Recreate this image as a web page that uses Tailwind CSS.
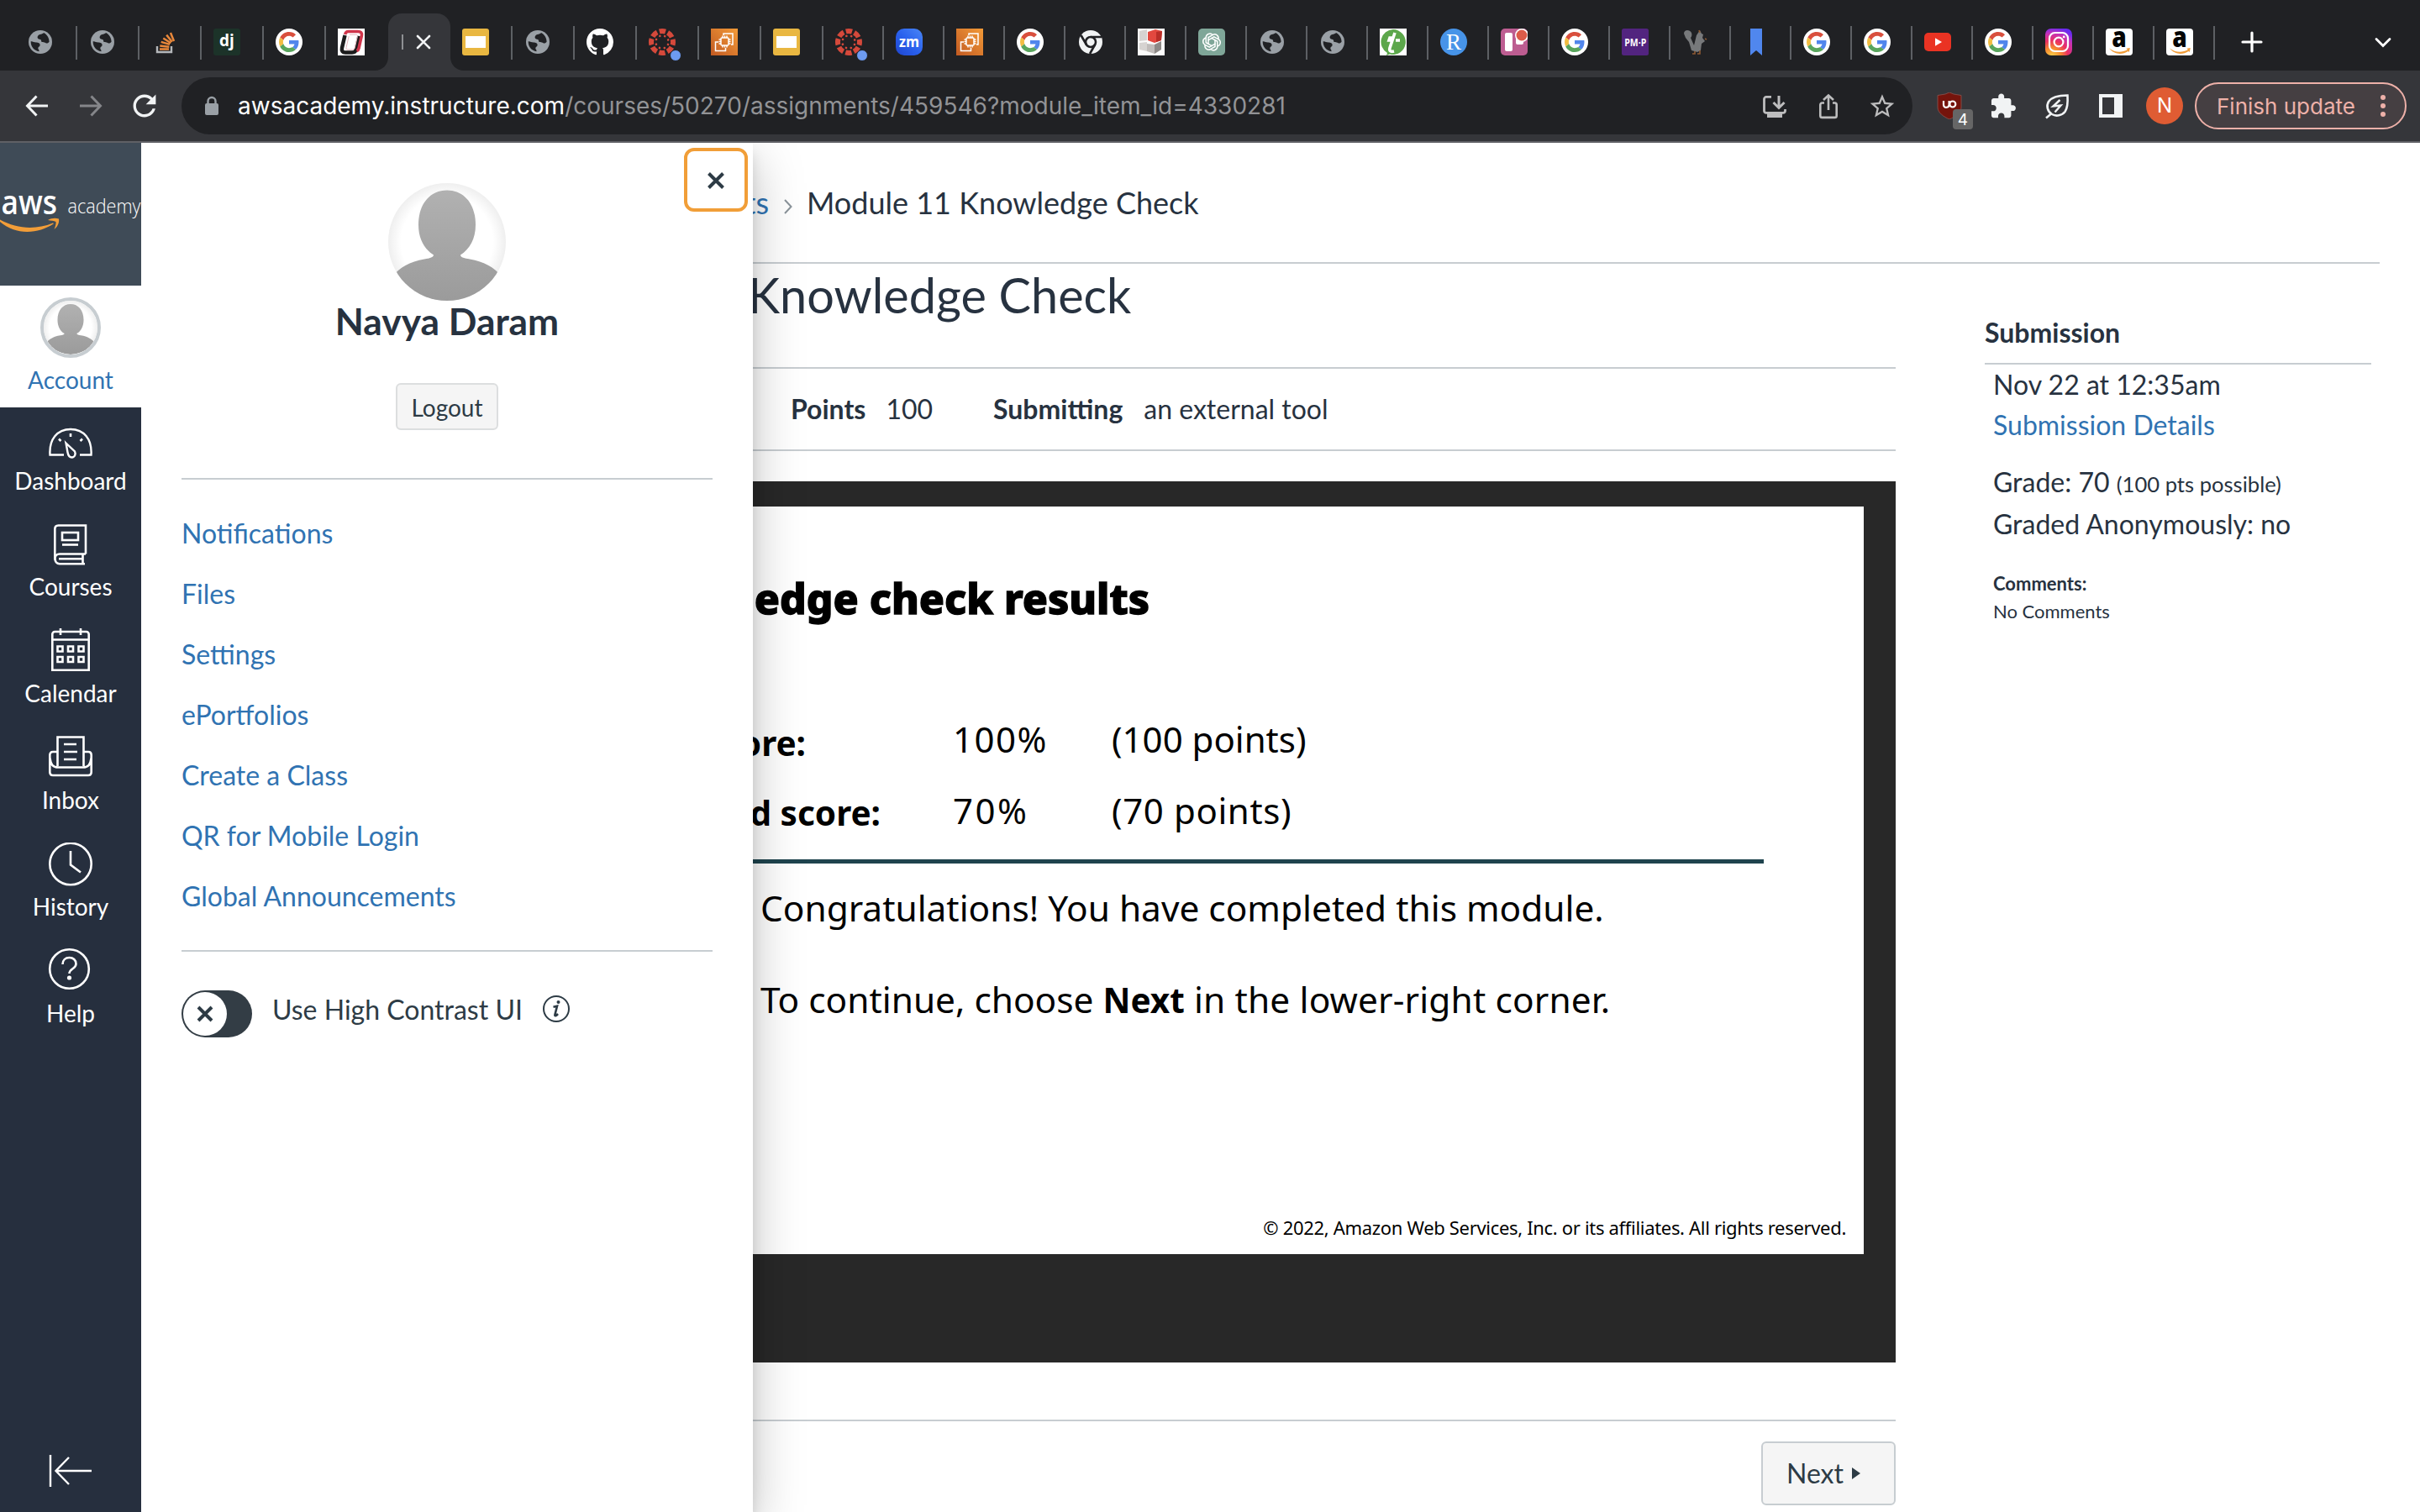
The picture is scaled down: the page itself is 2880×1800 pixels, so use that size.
<!DOCTYPE html>
<html lang="en">
<head>
<meta charset="utf-8">
<title>Module 11 Knowledge Check</title>
<script src="https://cdn.jsdelivr.net/npm/@tailwindcss/browser@4"></script>
</head>
<body class="w-[2880px] h-[1800px] overflow-hidden bg-white text-[#273240] font-['Lato',sans-serif]">

<!-- Shared icon symbols -->
<svg class="absolute size-0" aria-hidden="true">
  <defs>
    <linearGradient id="g-ec2" x1="0" y1="1" x2="1" y2="0"><stop offset="0" stop-color="#c25a22"/><stop offset="1" stop-color="#f39b38"/></linearGradient>
    <linearGradient id="g-zoom" x1="0" y1="1" x2="1" y2="0"><stop offset="0" stop-color="#1f45cf"/><stop offset=".5" stop-color="#2a62ee"/><stop offset="1" stop-color="#4a86f5"/></linearGradient>
    <radialGradient id="g-ig" cx=".25" cy="1.05" r="1.1"><stop offset="0" stop-color="#fdd74f"/><stop offset=".3" stop-color="#f68b2f"/><stop offset=".55" stop-color="#ea2f62"/><stop offset=".8" stop-color="#c532b8"/><stop offset="1" stop-color="#6a2bf0"/></radialGradient>
    <linearGradient id="g-face" x1="0" y1="0" x2="0" y2="1"><stop offset="0" stop-color="#b1b1b1"/><stop offset="1" stop-color="#999"/></linearGradient>
    <radialGradient id="g-halo" cx=".5" cy=".5" r=".5"><stop offset="0" stop-color="#fff"/><stop offset=".78" stop-color="#fff"/><stop offset="1" stop-color="#efefef"/></radialGradient>
    <clipPath id="c-round"><circle cx="70" cy="70" r="70"/></clipPath>
  </defs>
  <symbol id="globe" viewBox="0 0 32 32"><circle cx="16" cy="16" r="14" fill="#9aa0a6"/><path d="M20.500 5.200c-1.500 2-5 1.300-6.700 3.500-1.500 2-.3 3.900 1.700 4.300 1.600.2 2.300 1.200 2.200 2.700 1.200 1.400 3.500.2 5 1.500 1.300 1.200 3.200.4 4.400-1.200C27 11 24.300 7 20.500 5.200z" fill="#202124" transform="translate(-.5 -.3)"/><path d="M4.700 15.300c2.400-.2 3.600 1.200 6.300 1.300 2.500 0 4.800 1 4.600 3.200-.2 2-2.100 1.800-2.300 3.500-.1 1.400 1.500 1.700 1.200 3.900C8.500 26.500 4.500 21.500 4.700 15.300z" fill="#202124"/></symbol>
  <symbol id="google" viewBox="0 0 32 32"><circle cx="16" cy="16" r="16" fill="#fff"/><g transform="translate(4 4) scale(.5)"><path fill="#d94f3d" d="M24 9.500c3.540 0 6.710 1.220 9.210 3.600l6.850-6.850C35.900 2.380 30.470 0 24 0 14.620 0 6.510 5.380 2.560 13.220l7.980 6.190C12.430 13.720 17.740 9.500 24 9.500z"/><path fill="#5186ec" d="M46.980 24.550c0-1.570-.15-3.090-.38-4.550H24v9.020h12.940c-.58 2.960-2.260 5.480-4.780 7.180l7.730 6c4.510-4.180 7.090-10.360 7.090-17.650z"/><path fill="#f2bd42" d="M10.530 28.590c-.48-1.450-.76-2.990-.76-4.590s.27-3.140.76-4.590l-7.980-6.190C.92 16.460 0 20.120 0 24c0 3.880.92 7.540 2.560 10.780l7.970-6.190z"/><path fill="#58a55c" d="M24 48c6.480 0 11.930-2.130 15.890-5.810l-7.730-6c-2.150 1.450-4.920 2.300-8.160 2.300-6.260 0-11.570-4.220-13.470-9.910l-7.980 6.190C6.510 42.620 14.620 48 24 48z"/></g></symbol>
  <symbol id="slides" viewBox="0 0 32 32"><rect width="32" height="32" rx="3" fill="#e9b741"/><rect x="4" y="9" width="24" height="14" fill="#fff"/></symbol>
  <symbol id="canvas" viewBox="0 0 32 32"><circle cx="16" cy="16" r="13" fill="none" stroke="#d5493b" stroke-width="6" stroke-dasharray="7.400 2.810" stroke-dashoffset="3.700"/><circle cx="16" cy="16" r="7.600" fill="none" stroke="#d5493b" stroke-width="2.600" stroke-linecap="round" stroke-dasharray=".1 5.870" stroke-dashoffset="-2.980"/></symbol>
  <symbol id="ec2" viewBox="0 0 32 32"><rect width="32" height="32" fill="url(#g-ec2)"/><g fill="none" stroke="#fff" stroke-width="1.500"><rect x="12" y="11" width="9" height="9" rx="1"/><path d="M14 11V8.500M16.500 11V8.500M19 11V8.500M14 20v2.500M16.500 20v2.500M19 20v2.500M12 13H9.500M12 15.500H9.500M12 18H9.500M21 13h2.500M21 15.500h2.500M21 18h2.500M15 8V6h11v13h-2M9 16H5.500v10.500h12V23"/></g></symbol>
  <symbol id="amazon" viewBox="0 0 32 32"><rect width="32" height="32" rx="4" fill="#fff"/><text x="16" y="21.500" text-anchor="middle" font-family="Open Sans" font-weight="800" font-size="33" textLength="17.500" lengthAdjust="spacingAndGlyphs" fill="#050505">a</text><path d="M4 23.500c7 5.200 15 5.400 22 1.600l-1.700-1.300 4.500-.8-1 5-1.300-1C19.500 31.500 10 31 4 23.500z" fill="#f09b37"/></symbol>
  <symbol id="face" viewBox="0 0 140 140"><circle cx="70" cy="70" r="70" fill="url(#g-halo)"/><g clip-path="url(#c-round)" fill="url(#g-face)"><path d="M70 8.500c20 0 34 16 34 41 0 17-7 29-18 36 0 3 5 4 11 5 17 3 30 10 38 21v40H5v-40c8-11 21-18 38-21 6-1 11-2 11-5-11-7-18-19-18-36 0-25 14-41 34-41z"/></g></symbol>
</svg>

<!-- Browser tab strip -->
<header class="h-[84px] bg-[#202124] flex items-start pl-[18px]">
  <div class="flex h-[40px] mt-[31px]">
    <div class="w-[74px] h-10 pt-[3px] pl-[14px] border-r-2 border-[#5d6064]"><svg class="size-8"><use href="#globe"/></svg></div>
    <div class="w-[74px] h-10 pt-[3px] pl-[14px] border-r-2 border-[#5d6064]"><svg class="size-8"><use href="#globe"/></svg></div>
    <div class="w-[74px] h-10 pt-[3px] pl-[14px] border-r-2 border-[#5d6064]">
      <svg class="size-8" viewBox="0 0 32 32" fill="none"><path d="M7 21v7h17v-7" stroke="#b4b7ba" stroke-width="2.400"/><path d="M10 24.500h11M10.300 20.500l11 1.200M11.700 15.900l10.300 3M14.300 11.500l9 5.700M18.200 7.600l6.500 8.200M23 5l4 10" stroke="#e8873a" stroke-width="2.500"/></svg>
    </div>
    <div class="w-[74px] h-10 pt-[3px] pl-[14px] border-r-2 border-[#5d6064]">
      <div class="size-8 rounded-[3px] bg-[#1c3329] text-white font-['Open_Sans',sans-serif] font-bold text-[19px] leading-[28px] text-center">dj</div>
    </div>
    <div class="w-[74px] h-10 pt-[3px] pl-[14px] border-r-2 border-[#5d6064]"><svg class="size-8"><use href="#google"/></svg></div>
    <div class="w-[74px] h-10 pt-[3px] pl-[14px]">
      <svg class="size-8" viewBox="0 0 32 32" fill="none"><rect width="32" height="32" fill="#fff"/><path d="M8.500 8L5 23c-.7 3.500.8 5.500 4 5.500h8c3 0 4.500-1.500 5.200-4.500L25.500 9" stroke="#1c1c1c" stroke-width="4.500"/><path d="M12.500 3.500H24c3.500 0 5 1.800 4.400 5L25 23.500c-.4 1.800-1.200 2.600-2.500 3M12.500 3.500c-2.200 0-3.300 1.200-3.900 3.500" stroke="#d0354b" stroke-width="3.600"/><path d="M14 7.200h7.500c1.500 0 2.200.8 1.900 2.300l-3.200 13.600c-.3 1.300-1.100 1.900-2.300 1.900h-6c-1.500 0-2.200-.8-1.900-2.300l3.200-13.600" stroke="#e5b7be" stroke-width="1"/></svg>
    </div>
  </div>
  <!-- Active tab -->
  <div class="relative w-[74px] h-[68px] mt-4 bg-[#35363a] rounded-t-[16px] flex items-center pl-4">
    <svg class="absolute bottom-0 -left-4 size-4" viewBox="0 0 16 16"><path d="M16 0v16H0C9 16 16 9 16 0z" fill="#35363a"/></svg>
    <svg class="absolute bottom-0 -right-4 size-4" viewBox="0 0 16 16"><path d="M0 0v16h16C7 16 0 9 0 0z" fill="#35363a"/></svg>
    <span class="w-[2px] h-[18px] bg-[#8e9093]"></span>
    <svg class="size-5 ml-[14px]" viewBox="0 0 20 20"><path d="M3 3l14 14M17 3L3 17" stroke="#f1f3f4" stroke-width="2.600" stroke-linecap="round"/></svg>
  </div>
  <div class="flex h-[40px] mt-[31px]">
    <div class="w-[74px] h-10 pt-[3px] pl-[14px] border-r-2 border-[#5d6064]"><svg class="size-8"><use href="#slides"/></svg></div>
    <div class="w-[74px] h-10 pt-[3px] pl-[14px] border-r-2 border-[#5d6064]"><svg class="size-8"><use href="#globe"/></svg></div>
    <div class="w-[74px] h-10 pt-[3px] pl-[14px] border-r-2 border-[#5d6064]">
      <svg class="size-8" viewBox="0 0 16 16"><path fill="#fff" d="M8 0C3.580 0 0 3.580 0 8c0 3.540 2.290 6.530 5.470 7.590.4.070.55-.17.55-.38 0-.19-.01-.82-.01-1.490-2.010.37-2.530-.49-2.690-.94-.09-.23-.48-.94-.82-1.130-.28-.15-.68-.52-.01-.53.63-.01 1.080.58 1.230.82.72 1.210 1.870.87 2.330.66.070-.52.28-.87.51-1.070-1.780-.2-3.640-.89-3.640-3.950 0-.87.31-1.590.82-2.150-.08-.2-.36-1.020.08-2.120 0 0 .67-.21 2.200.82.64-.18 1.320-.27 2-.27.68 0 1.360.09 2 .27 1.530-1.040 2.200-.82 2.200-.82.44 1.100.16 1.920.08 2.120.51.56.82 1.270.82 2.150 0 3.070-1.870 3.750-3.650 3.950.29.25.54.73.54 1.480 0 1.070-.01 1.930-.01 2.200 0 .21.15.46.55.38A8.013 8.013 0 0016 8c0-4.420-3.580-8-8-8z"/></svg>
    </div>
    <div class="relative w-[74px] h-10 pt-[3px] pl-[14px] border-r-2 border-[#5d6064]"><svg class="size-8"><use href="#canvas"/></svg><span class="absolute left-[39px] top-[28px] size-[14px] rounded-full bg-[#6d9bf1] border border-[#202124]"></span></div>
    <div class="w-[74px] h-10 pt-[3px] pl-[14px] border-r-2 border-[#5d6064]"><svg class="size-8"><use href="#ec2"/></svg></div>
    <div class="w-[74px] h-10 pt-[3px] pl-[14px] border-r-2 border-[#5d6064]"><svg class="size-8"><use href="#slides"/></svg></div>
    <div class="relative w-[72px] h-10 pt-[3px] pl-[14px] border-r-2 border-[#5d6064]"><svg class="size-8"><use href="#canvas"/></svg><span class="absolute left-[39px] top-[28px] size-[14px] rounded-full bg-[#6d9bf1] border border-[#202124]"></span></div>
    <div class="w-[72px] h-10 pt-[3px] pl-[14px] border-r-2 border-[#5d6064]">
      <svg class="size-8" viewBox="0 0 32 32"><rect width="32" height="32" rx="10" fill="url(#g-zoom)"/><text x="16" y="21.500" text-anchor="middle" font-family="Open Sans" font-weight="700" font-size="17" textLength="24" lengthAdjust="spacingAndGlyphs" fill="#fff">zm</text></svg>
    </div>
    <div class="w-[72px] h-10 pt-[3px] pl-[14px] border-r-2 border-[#5d6064]"><svg class="size-8"><use href="#ec2"/></svg></div>
    <div class="w-[72px] h-10 pt-[3px] pl-[14px] border-r-2 border-[#5d6064]"><svg class="size-8"><use href="#google"/></svg></div>
    <div class="w-[72px] h-10 pt-[3px] pl-[14px] border-r-2 border-[#5d6064]">
      <svg class="size-8" viewBox="0 0 32 32"><circle cx="16" cy="16" r="14" fill="#f1f3f4"/><circle cx="16" cy="16" r="6" fill="#f1f3f4" stroke="#202124" stroke-width="2.600"/><path d="M16 10h13M10.800 19L4.500 8M21.200 19L15 30" stroke="#202124" stroke-width="2.600"/></svg>
    </div>
    <div class="w-[72px] h-10 pt-[3px] pl-[14px] border-r-2 border-[#5d6064]">
      <svg class="size-8" viewBox="0 0 32 32"><rect width="32" height="32" fill="#fbfbfb"/><path d="M2 3l9-2v13l-9 1zM2 17l9-1v11l-9-2z" fill="#d6d3d1"/><path d="M11 18l9 1v11l-9-3z" fill="#c0bcba"/><path d="M20 19l8-4v10l-8 5z" fill="#8d8987"/><path d="M12 4l9-3 8 2-1 11-8 3-8-3z" fill="#e2483f"/><path d="M22 4l7-1-1 11-6 2z" fill="#b92e28"/></svg>
    </div>
    <div class="w-[72px] h-10 pt-[3px] pl-[14px] border-r-2 border-[#5d6064]">
      <svg class="size-8" viewBox="0 0 32 32" fill="none"><rect width="32" height="32" rx="5" fill="#7fa698"/><g stroke="#fff" stroke-width="1.500"><path d="M12 19V10.500l5.500-3.200a4.600 4.600 0 016.500 5"/><path d="M12 19V10.500l5.500-3.200a4.600 4.600 0 016.500 5" transform="rotate(60 16 16)"/><path d="M12 19V10.500l5.500-3.200a4.600 4.600 0 016.500 5" transform="rotate(120 16 16)"/><path d="M12 19V10.500l5.500-3.200a4.600 4.600 0 016.500 5" transform="rotate(180 16 16)"/><path d="M12 19V10.500l5.500-3.200a4.600 4.600 0 016.500 5" transform="rotate(240 16 16)"/><path d="M12 19V10.500l5.500-3.200a4.600 4.600 0 016.500 5" transform="rotate(300 16 16)"/></g></svg>
    </div>
    <div class="w-[72px] h-10 pt-[3px] pl-[14px] border-r-2 border-[#5d6064]"><svg class="size-8"><use href="#globe"/></svg></div>
    <div class="w-[72px] h-10 pt-[3px] pl-[14px] border-r-2 border-[#5d6064]"><svg class="size-8"><use href="#globe"/></svg></div>
    <div class="w-[72px] h-10 pt-[3px] pl-[14px] border-r-2 border-[#5d6064]">
      <svg class="size-8" viewBox="0 0 32 32"><rect width="32" height="32" fill="#fff"/><path d="M16 1a15 15 0 11-4 29.500L8 32l1-3A15 15 0 0116 1z" fill="#5ca74b"/><path d="M18 5l-2 6h-4l-1 3h4l-3 9c-1 4 1 5 5 4M19 14h5" fill="none" stroke="#fff" stroke-width="3.600"/></svg>
    </div>
    <div class="w-[72px] h-10 pt-[3px] pl-[14px] border-r-2 border-[#5d6064]">
      <div class="size-8 rounded-full bg-[#4794e8] text-white font-['Liberation_Serif',serif] text-[27px] leading-[32px] text-center">R</div>
    </div>
    <div class="w-[72px] h-10 pt-[3px] pl-[14px] border-r-2 border-[#5d6064]">
      <svg class="size-8" viewBox="0 0 32 32"><rect width="32" height="32" rx="5" fill="#bd5d91"/><rect x="5" y="5" width="9" height="22" rx="2" fill="#fff"/><rect x="18" y="5" width="9" height="14" rx="2" fill="#fff"/><circle cx="25" cy="8" r="8" fill="#fff"/><circle cx="25" cy="8" r="6.500" fill="#dc5b49"/></svg>
    </div>
    <div class="w-[72px] h-10 pt-[3px] pl-[14px] border-r-2 border-[#5d6064]"><svg class="size-8"><use href="#google"/></svg></div>
    <div class="w-[72px] h-10 pt-[3px] pl-[14px] border-r-2 border-[#5d6064]">
      <svg class="size-8" viewBox="0 0 32 32"><rect width="32" height="32" rx="2.500" fill="#52247f"/><text x="16.300" y="21" text-anchor="middle" font-family="Open Sans" font-weight="700" font-size="12.500" textLength="26" lengthAdjust="spacingAndGlyphs" fill="#fff">PM·P</text></svg>
    </div>
    <div class="w-[72px] h-10 pt-[3px] pl-[14px] border-r-2 border-[#5d6064]">
      <svg class="size-8" viewBox="0 0 32 32"><path d="M2 6c0-5 7-5 9-1 1 3 0 5-1 6l4 9 3-12 4-6 2 4 2 1-1 4 3 4-4 3-1 8-4 2-7-2-3-10-4-5z" fill="#77797b"/><path d="M15 27v3h-3M21 26v4h-3M20 2l1 3M27 12l2 1" fill="none" stroke="#8f5a33" stroke-width="1.600"/></svg>
    </div>
    <div class="w-[72px] h-10 pt-[3px] pl-[14px] border-r-2 border-[#5d6064]">
      <svg class="size-8" viewBox="0 0 32 32"><path d="M9 0h14v32l-7-6-7 6z" fill="#5087ee"/></svg>
    </div>
    <div class="w-[72px] h-10 pt-[3px] pl-[14px] border-r-2 border-[#5d6064]"><svg class="size-8"><use href="#google"/></svg></div>
    <div class="w-[72px] h-10 pt-[3px] pl-[14px] border-r-2 border-[#5d6064]"><svg class="size-8"><use href="#google"/></svg></div>
    <div class="w-[72px] h-10 pt-[3px] pl-[14px] border-r-2 border-[#5d6064]">
      <svg class="size-8" viewBox="0 0 32 32"><rect y="5" width="32" height="22" rx="5" fill="#ea3323"/><path d="M13 11.200l8 4.800-8 4.800z" fill="#fff"/></svg>
    </div>
    <div class="w-[72px] h-10 pt-[3px] pl-[14px] border-r-2 border-[#5d6064]"><svg class="size-8"><use href="#google"/></svg></div>
    <div class="w-[72px] h-10 pt-[3px] pl-[14px] border-r-2 border-[#5d6064]">
      <svg class="size-8" viewBox="0 0 32 32" fill="none"><rect width="32" height="32" rx="7" fill="url(#g-ig)"/><rect x="5" y="5" width="22" height="22" rx="6.500" stroke="#fff" stroke-width="2.200"/><circle cx="16" cy="16" r="5.400" stroke="#fff" stroke-width="2.200"/><circle cx="22.200" cy="9.900" r="1.400" fill="#fff"/></svg>
    </div>
    <div class="w-[72px] h-10 pt-[3px] pl-[14px] border-r-2 border-[#5d6064]"><svg class="size-8"><use href="#amazon"/></svg></div>
    <div class="w-[72px] h-10 pt-[3px] pl-[14px] border-r-2 border-[#5d6064]"><svg class="size-8"><use href="#amazon"/></svg></div>
  </div>
  <svg class="size-8 mt-[34px] ml-[28px]" viewBox="0 0 32 32"><path d="M16 5v22M5 16h22" stroke="#fff" stroke-width="3.200" stroke-linecap="round"/></svg>
  <svg class="size-8 mt-[34px] ml-[124px]" viewBox="0 0 32 32" fill="none"><path d="M8 12.500l8 8 8-8" stroke="#fff" stroke-width="2.800" stroke-linecap="round"/></svg>
</header>

<!-- Browser toolbar -->
<div class="h-[86px] bg-[#35363a] border-b-2 border-[#5f6065] flex items-center pl-7">
  <svg class="size-8 shrink-0" viewBox="0 0 32 32" fill="none"><path d="M29 16H5M15.500 4.500L4.500 16l11 11.500" stroke="#f1f3f4" stroke-width="3"/></svg>
  <svg class="size-8 shrink-0 ml-8" viewBox="0 0 32 32" fill="none"><path d="M3 16h24M16.500 4.500l11 11.500-11 11.500" stroke="#85868a" stroke-width="3"/></svg>
  <svg class="size-8 shrink-0 ml-8" viewBox="0 0 32 32"><path transform="translate(-4.200 -4.200) scale(1.680)" fill="#f1f3f4" d="M17.650 6.350C16.200 4.900 14.210 4 12 4c-4.420 0-7.990 3.580-7.990 8s3.570 8 7.990 8c3.730 0 6.840-2.550 7.730-6h-2.080c-.82 2.330-3.040 4-5.650 4-3.310 0-6-2.690-6-6s2.690-6 6-6c1.660 0 3.140.69 4.220 1.780L13 11h7V4l-2.350 2.350z"/></svg>
  <div class="ml-7 w-[2060px] h-[68px] rounded-full bg-[#202124] flex items-center pl-[22px] pr-5">
    <svg class="size-7 shrink-0" viewBox="0 0 28 28"><rect x="6" y="11" width="16" height="14" rx="2" fill="#9aa0a6"/><path d="M9.500 12V8.500a4.500 4.500 0 019 0V12" fill="none" stroke="#9aa0a6" stroke-width="2.400"/></svg>
    <div class="ml-[17px] font-['Inter',sans-serif] text-[28px] leading-[40px] text-[#929396] whitespace-nowrap"><span class="text-white">awsacademy.instructure.com</span>/courses/50270/assignments/459546?module_item_id=4330281</div>
    <div class="ml-auto flex gap-8">
      <svg class="size-8" viewBox="0 0 32 32" fill="none" stroke="#bdbdbe" stroke-width="2.800"><path d="M12 5.400H6a2.500 2.500 0 00-2.500 2.500v14a2.500 2.500 0 002.500 2.500h20a2.500 2.500 0 002.500-2.500v-2"/><path d="M21 4v14M14.500 12l6.500 6.500 6.500-6.500" stroke-width="3"/><path d="M7 27h18" stroke-width="6"/></svg>
      <svg class="size-8" viewBox="0 0 32 32" fill="none" stroke="#bdbdbe" stroke-width="2.600"><path d="M11 12.500H8.500a2.200 2.200 0 00-2.200 2.200v13a2.200 2.200 0 002.200 2.200h15a2.200 2.200 0 002.200-2.200v-13a2.200 2.200 0 00-2.200-2.200H21M16 21V4.500M10 9l6-5.500L22 9"/></svg>
      <svg class="size-8" viewBox="0 0 32 32"><path transform="translate(-1.200 -.5) scale(1.430)" fill="#bdbdbe" d="M22 9.240l-7.190-.62L12 2 9.190 8.630 2 9.240l5.460 4.730L5.820 21 12 17.270 18.180 21l-1.630-7.030L22 9.240zM12 15.400l-3.760 2.270 1-4.280-3.320-2.880 4.380-.38L12 6.100l1.710 4.040 4.380.38-3.320 2.880 1 4.280L12 15.400z"/></svg>
    </div>
  </div>
  <div class="relative ml-7 size-8 shrink-0">
    <svg class="size-8" viewBox="0 0 32 32"><path d="M16 0l5 2 9 1.500V18c0 6-7 11-14 14C9 29 2 24 2 18V3.500L11 2z" fill="#75140c" stroke="#8d5550" stroke-width=".8"/><path d="M9 10v4.500a3 3 0 003.300 3.300c2 0 3.300-1.300 3.300-3.300V10" fill="none" stroke="#fff" stroke-width="2.200"/><circle cx="19.800" cy="14" r="3.500" fill="none" stroke="#fff" stroke-width="2.200"/></svg>
    <span class="absolute left-5 top-5 w-6 h-6 rounded-[4px] bg-[#666] text-white font-['Inter',sans-serif] text-[19px] leading-[26px] text-center">4</span>
  </div>
  <svg class="ml-8 size-8 shrink-0" viewBox="0 0 32 32"><path transform="translate(-.8 0) scale(1.380)" fill="#f1f3f4" d="M20.500 11H19V7c0-1.100-.9-2-2-2h-4V3.500C13 2.120 11.880 1 10.500 1S8 2.120 8 3.500V5H4c-1.100 0-1.990.9-1.990 2v3.800H3.500c1.490 0 2.700 1.210 2.700 2.700s-1.210 2.700-2.700 2.700H2V20c0 1.100.9 2 2 2h3.800v-1.500c0-1.490 1.210-2.700 2.700-2.700 1.490 0 2.700 1.210 2.700 2.700V22H17c1.100 0 2-.9 2-2v-4h1.500c1.380 0 2.500-1.120 2.500-2.500S21.880 11 20.500 11z"/></svg>
  <svg class="ml-8 size-8 shrink-0" viewBox="0 0 32 32" fill="none" stroke="#f1f3f4" stroke-width="2.600"><path d="M28.500 3.500c.5 8 .5 14.500-3 19.500-3.500 4.500-10.500 6-15.500 3C4.500 22.500 3 16 6 11 10 5 18 3.500 28.500 3.500zM9 25.500l-6 5"/><path d="M19.500 9l-8 7.500 9-1-7 8" stroke-width="2.400"/></svg>
  <svg class="ml-8 size-8 shrink-0" viewBox="0 0 32 32"><path d="M2 2h28v28H2zM6 6v20h14V6z" fill="#f1f3f4" fill-rule="evenodd"/></svg>
  <div class="ml-[26px] size-11 shrink-0 rounded-full bg-[#df5c33] text-white font-['Inter',sans-serif] text-[24px] leading-[44px] text-center">N</div>
  <div class="ml-[14px] w-[252px] h-14 rounded-full border-2 border-[#eeb1a9] bg-[#453f42] flex items-center pl-6 text-[#eeb1a9] font-['Inter',sans-serif] text-[26px] whitespace-nowrap">
    Finish update
    <div class="flex flex-col gap-1 ml-[30px]"><span class="size-[6px] rounded-full bg-[#eeb1a9]"></span><span class="size-[6px] rounded-full bg-[#eeb1a9]"></span><span class="size-[6px] rounded-full bg-[#eeb1a9]"></span></div>
  </div>
</div>

<div class="relative flex h-[1630px]">
  <!-- Global navigation -->
  <nav class="w-[168px] shrink-0 bg-[#262f3e] text-white text-[28px] leading-[34px] flex flex-col">
    <div class="h-[170px] bg-[#3f4b57]">
      <svg class="w-[168px] h-[170px]" viewBox="0 0 168 170"><text x="1.500" y="85.300" font-family="Open Sans" font-weight="600" font-size="39" textLength="66.500" lengthAdjust="spacingAndGlyphs" fill="#fff">aws</text><text x="80.500" y="84" font-family="Open Sans" font-weight="300" font-size="23.500" textLength="87" lengthAdjust="spacingAndGlyphs" fill="#fff">academy</text><path d="M0 91.500c20 11 42 12.500 63 4l1 .8C45 109 18 110 0 94z" fill="#f29d38"/><path d="M57 92c4-2.500 9-3 13-1.500.8 4.500-1.500 9.500-5.500 12.500 1.300-3.500 2.500-7 2-9-2.300-1-6-1.500-9.500-2z" fill="#f29d38"/></svg>
    </div>
    <a class="h-[145px] bg-white text-[#3073b2] flex flex-col items-center pt-[14px]">
      <span class="size-[72px] rounded-full border-4 border-[#c7cdd1] overflow-hidden"><svg class="size-16"><use href="#face"/></svg></span>
      <span class="mt-[9px]">Account</span>
    </a>
    <div class="flex flex-col gap-[34px] pt-[10px]">
      <a class="flex flex-col items-center gap-2 -mb-px">
        <svg class="w-[52px] h-[52px]" viewBox="0 0 52 52" fill="none" stroke="#fff" stroke-width="2.400"><path d="M18 46.500H1.500C.3 28 10 16 26 16s25.700 12 24.500 30.500H37"/><path d="M26 21v4M12 27.500l2.500 2.500M40 27.500L37.500 30" stroke-width="2.600"/><path d="M20.500 32.500l10.500 10c1.500 3 0 7-3.500 7s-4.500-3-5-6z"/></svg>
        <span>Dashboard</span>
      </a>
      <a class="flex flex-col items-center gap-[7px]">
        <svg class="w-[52px] h-[52px]" viewBox="0 0 52 52" fill="none" stroke="#fff" stroke-width="2.600"><path d="M44 37.500V3.500H11.500C8.500 3.500 7.300 5 7.300 8v36.500M44 37.500H13c-3.500 0-5.500 2-5.500 5.500s2 6.200 5.500 6.200h30M40.500 38v10.500M12 43.300h28" /><rect x="16" y="12" width="19" height="9"/><path d="M16 26.500h19"/></svg>
        <span>Courses</span>
      </a>
      <a class="flex flex-col items-center gap-[7px]">
        <svg class="w-[52px] h-[52px] overflow-visible" viewBox="0 0 52 52" fill="none" stroke="#fff" stroke-width="2.600"><path d="M4.300 48.800V6a3 3 0 013-3h37.400a3 3 0 013 3v42.800zM4.300 12.500h43.400M14 -1v8M38 -1v8"/><path d="M10.500 20.500h6v6h-6zM23 20.500h6v6h-6zM35.500 20.500h6v6h-6zM10.500 33h6v6h-6zM23 33h6v6h-6zM35.500 33h6v6h-6z"/></svg>
        <span>Calendar</span>
      </a>
      <a class="flex flex-col items-center gap-[7px]">
        <svg class="w-[52px] h-[52px]" viewBox="0 0 52 52" fill="none" stroke="#fff" stroke-width="2.600"><path d="M10.500 36V1.500h31V36M10 19H5c-2.500 0-3.700 1.500-3.700 4v20c0 2.500 1.200 4 3.700 4h42c2.500 0 3.700-1.500 3.700-4V23c0-2.500-1.200-4-3.700-4h-5M1.500 27c1 7 3 10.500 10 10.500h29c7 0 9-3.500 10-10.500M18 10h15M18 19h16M18 28h15"/></svg>
        <span>Inbox</span>
      </a>
      <a class="flex flex-col items-center gap-[7px]">
        <svg class="w-[52px] h-[52px]" viewBox="0 0 52 52" fill="none" stroke="#fff" stroke-width="2.600"><circle cx="26" cy="25.500" r="24.700"/><path d="M26 10v16.500l12 9"/></svg>
        <span>History</span>
      </a>
      <a class="flex flex-col items-center gap-[7px]">
        <svg class="w-[52px] h-[52px] overflow-visible" viewBox="0 0 52 52" fill="none" stroke="#fff" stroke-width="2.600"><circle cx="24.500" cy="23.500" r="23.300"/><path d="M16.500 18c0-5 3.500-8 8-8s8 3 8 7.500c0 6-8 5.500-8 11.500"/><circle cx="24.500" cy="34" r="2.600" fill="#fff" stroke="none"/></svg>
        <span>Help</span>
      </a>
    </div>
    <svg class="w-[52px] h-[40px] mx-auto mt-auto mb-[29px]" viewBox="0 0 52 40" fill="none" stroke="#fff" stroke-width="2.400"><path d="M2 1v38M51 20H8M24 4L8.500 20 24 36"/></svg>
  </nav>

  <!-- Page -->
  <main class="flex-1 px-12">
    <div class="h-[144px] border-b-2 border-[#c7cdd1] flex items-center text-[36px] whitespace-nowrap">
      <a class="w-[699px] text-right text-[#3073b2]">Assignments</a>
      <svg class="w-[10px] h-[18px] ml-[18px] mt-[9px]" viewBox="0 0 10 18" fill="none"><path d="M1 1l7.500 8L1 17" stroke="#8b949b" stroke-width="2"/></svg>
      <span class="ml-[17px]">Module 11 Knowledge Check</span>
    </div>
    <div class="flex pl-[384px]">
      <section class="w-[1656px]">
        <h1 class="pt-px text-[57.6px] leading-[72px] whitespace-nowrap">Module 11 Knowledge Check</h1>
        <div class="mt-[50px] h-[100px] border-y-2 border-[#c7cdd1] flex items-center pl-[341px] text-[32px]">
          <span class="font-bold">Points</span><span class="ml-[24px]">100</span>
          <span class="font-bold ml-[72px]">Submitting</span><span class="ml-[25px]">an external tool</span>
        </div>
        <div class="mt-9 h-[1049px] bg-[#282828] pt-[30px] px-[38px]">
          <div class="h-[890px] bg-white text-black font-['Noto_Sans',sans-serif] text-[42px] leading-[60px] pt-[79px] whitespace-nowrap">
            <h2 class="w-[730px] text-right font-extrabold text-[49.8px] leading-[60px] [-webkit-text-stroke:1.4px_black]">Knowledge check results</h2>
            <div class="mt-[108px] h-[60px] flex">
              <span class="w-[496px] pr-[175px] pt-[5px] text-right font-bold text-[40.5px]">Max score:</span>
              <span class="w-[189px] tracking-[1.5px]">100%</span>
              <span>(100 points)</span>
            </div>
            <div class="mt-[25px] h-[60px] flex">
              <span class="w-[496px] pr-[86px] pt-[3px] text-right font-bold text-[40.5px]">Required score:</span>
              <span class="w-[189px] tracking-[2.5px]">70%</span>
              <span class="tracking-[0.6px]">(70 points)</span>
            </div>
            <div class="mt-7 w-[1461px] h-[5px] bg-[#1f444e]"></div>
            <p class="mt-[23px] pl-[267px] text-[42.4px]">Congratulations! You have completed this module.</p>
            <p class="mt-[49px] pl-[267px] text-[42.4px]">To continue, choose <b class="text-[40.5px]">Next</b><span class="tracking-[0.15px]"> in the lower-right corner.</span></p>
            <p class="mt-[225px] pr-[21px] text-right text-[22px] leading-[30px] tracking-[-0.32px]">© 2022, Amazon Web Services, Inc. or its affiliates. All rights reserved.</p>
          </div>
        </div>
        <div class="mt-[68px] border-t-2 border-[#c7cdd1] pt-6 flex justify-end">
          <button class="w-40 h-[76px] rounded-[6px] border-2 border-[#c7cdd1] bg-[#f5f5f5] text-[#2d3b45] text-[32px] flex items-center pl-7">Next<svg class="ml-[10px] w-[10px] h-[14px]" viewBox="0 0 10 14"><path d="M0 0l10 7-10 7z" fill="#2d3b45"/></svg></button>
        </div>
      </section>
      <aside class="ml-[106px] w-[460px] text-[32px] leading-[48px] whitespace-nowrap">
        <h2 class="mt-[63px] pb-[17px] border-b-2 border-[#c7cdd1] font-bold leading-[38px]">Submission</h2>
        <div class="pl-[10px]">
          <div>Nov 22 at 12:35am</div>
          <div class="text-[#3073b2]">Submission Details</div>
          <div class="mt-[20px]">Grade: 70 <span class="text-[25.6px]">(100 pts possible)</span></div>
          <div>Graded Anonymously: no</div>
          <div class="mt-[30px] text-[22px] leading-[33px] font-bold">Comments:</div>
          <div class="text-[22px] leading-[33px]">No Comments</div>
        </div>
      </aside>
    </div>
  </main>

  <!-- Account tray, laid over the page -->
  <aside class="absolute left-[168px] top-0 w-[728px] h-[1630px] bg-white shadow-[0_12px_14px_rgba(0,0,0,0.1),0_20px_56px_rgba(0,0,0,0.25)] [clip-path:inset(0_-80px_0_0)] px-12">
    <button class="absolute left-[646px] top-[6px] size-[76px] rounded-[12px] border-4 border-[#f19e38] bg-white flex items-center justify-center pt-px"><svg class="size-5" viewBox="0 0 20 20"><path d="M1.500 1.500l17 17M18.500 1.500l-17 17" stroke="#2d3b45" stroke-width="4"/></svg></button>
    <div class="flex flex-col items-center pt-12">
      <svg class="size-[140px]"><use href="#face"/></svg>
      <h2 class="-mt-[2px] text-[44.3px] leading-[52px] font-bold">Navya Daram</h2>
      <button class="mt-12 w-[122px] h-14 pt-px rounded-[6px] border-2 border-[#dcdedf] bg-[#f5f5f5] text-[#2d3b45] text-[28px]">Logout</button>
    </div>
    <ul class="mt-[57px] py-[28px] border-y-2 border-[#c7cdd1] text-[32px] leading-[72px] text-[#3073b2]">
      <li>Notifications</li>
      <li>Files</li>
      <li>Settings</li>
      <li>ePortfolios</li>
      <li>Create a Class</li>
      <li>QR for Mobile Login</li>
      <li>Global Announcements</li>
    </ul>
    <div class="mt-[46px] flex text-[32px] leading-[45px] text-[#2d3b45]">
      <span class="w-21 h-14 rounded-full bg-[#333d45] p-[2px]"><span class="size-[52px] rounded-full bg-white flex items-center justify-center"><svg class="size-5" viewBox="0 0 20 20"><path d="M2 2l16 16M18 2L2 18" stroke="#2d3b45" stroke-width="4"/></svg></span></span>
      <span class="ml-[24px]">Use High Contrast UI</span>
      <svg class="ml-[24px] mt-[6px] size-8" viewBox="0 0 32 32" fill="none" stroke="#2d3b45"><circle cx="16" cy="16" r="15" stroke-width="2"/><circle cx="18.500" cy="8" r="2" fill="#2d3b45" stroke="none"/><path d="M12.500 13.800l4.500-1-2.600 10.200c-.4 2 1.300 1.500 3.600-1" stroke-width="2.600"/></svg>
    </div>
  </aside>
</div>
</body>
</html>
